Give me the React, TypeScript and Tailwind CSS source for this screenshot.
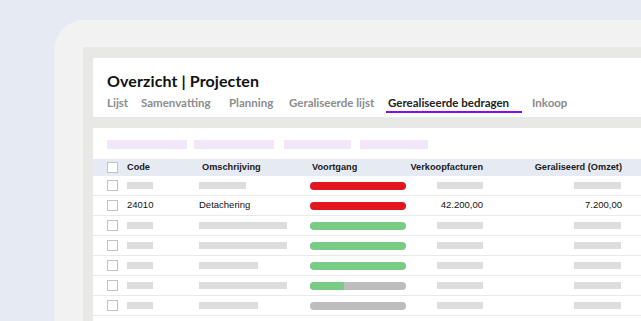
import React from "react";

type Row = {
  code?: string;
  desc?: string;
  descW: number;
  bar: "red" | "green" | "partial" | "gray";
  verk?: string;
  ger?: string;
};

const rows: Row[] = [
  { descW: 47, bar: "red" },
  { code: "24010", desc: "Detachering", descW: 0, bar: "red", verk: "42.200,00", ger: "7.200,00" },
  { descW: 88, bar: "green" },
  { descW: 88, bar: "green" },
  { descW: 59, bar: "green" },
  { descW: 88, bar: "partial" },
  { descW: 59, bar: "gray" },
];

function Checkbox() {
  return <div className="w-[11px] h-[11px] border border-[#c2c2c2] bg-white shrink-0" />;
}

function Bar({ kind }: { kind: Row["bar"] }) {
  if (kind === "partial") {
    return (
      <div className="w-[96px] h-[8px] rounded-full bg-[#bdbdbd] overflow-hidden flex">
        <div className="w-[34px] h-full bg-[#78cc84]" />
      </div>
    );
  }
  const cls =
    kind === "red" ? "bg-[#e3161f]" : kind === "green" ? "bg-[#78cc84]" : "bg-[#bdbdbd]";
  return <div className={`w-[96px] h-[8px] rounded-full ${cls}`} />;
}

function Ph({ w }: { w: number }) {
  return <div className="h-[7px] bg-[#dddddd]" style={{ width: w }} />;
}

const tabs = ["Lijst", "Samenvatting", "Planning", "Geraliseerde lijst"];
const tabW = ["w-[34px]", "w-[88px]", "w-[60px]", "w-[97px]"];

export default function App() {
  return (
    <div className="w-[641px] h-[321px] overflow-hidden bg-[#e6ebf3] pl-[54px] pt-[20px]">
      <div className="h-full bg-[#f2f2f2] rounded-tl-[30px] pl-[29px] pt-[27px]">
        <div className="h-full bg-[#e8e8e7] pl-[10px] pt-[11px] flex flex-col">
          {/* Header card */}
          <div className="bg-white h-[59px] pl-[14px] pt-[13px] flex flex-col font-['Lato',sans-serif]">
            <div className="text-[16px] leading-[19px] font-bold text-[#111] tracking-[0.1px]">Overzicht | Projecten</div>
            <div className="flex items-start mt-[5px] text-[11.5px] leading-[15px] font-bold">
              {tabs.map((t, i) => (
                <div key={t} className={`${tabW[i]} text-[#8c8c8c]`}>{t}</div>
              ))}
              <div className="w-[136px] pl-[2px] text-[#222] border-b-[2.5px] border-[#8a0ce3] pb-[1px]">
                Gerealiseerde bedragen
              </div>
              <div className="ml-[10px] text-[#8c8c8c]">Inkoop</div>
            </div>
          </div>

          {/* Table card */}
          <div className="mt-[11px] flex-1 bg-white pt-[12px] font-['Liberation_Sans',Arial,sans-serif]">
            <div className="flex pl-[14px] h-[9px]">
              <div className="w-[80px] h-full bg-[#f1e7f8]" />
              <div className="w-[80px] h-full bg-[#f1e7f8] ml-[7px]" />
              <div className="w-[67px] h-full bg-[#f1e7f8] ml-[10px]" />
              <div className="w-[68px] h-full bg-[#f1e7f8] ml-[9px]" />
            </div>

            <div className="mt-[10px] h-[17px] bg-[#e6ebf3] flex items-center pl-[14px] text-[9.2px] font-bold text-[#1a1a1a]">
              <Checkbox />
              <div className="ml-[9px] w-[72px]">Code</div>
              <div className="w-[111px] pl-[3px]">Omschrijving</div>
              <div className="w-[96px] pl-[2px]">Voortgang</div>
              <div className="w-[77px] text-right">Verkoopfacturen</div>
              <div className="w-[139px] text-right">Geraliseerd (Omzet)</div>
            </div>

            {rows.map((r, i) => (
              <div
                key={i}
                className="h-[20px] border-b border-[#e9e9e9] flex items-center pl-[14px] text-[9.5px] text-[#111]"
              >
                <Checkbox />
                <div className="ml-[9px] w-[72px]">{r.code ? r.code : <Ph w={26} />}</div>
                <div className="w-[111px]">{r.desc ? r.desc : <Ph w={r.descW} />}</div>
                <div className="w-[96px]">
                  <Bar kind={r.bar} />
                </div>
                <div className="w-[77px] flex justify-end">{r.verk ? r.verk : <Ph w={46} />}</div>
                <div className="w-[139px] flex justify-end">{r.ger ? r.ger : <div className="mr-[1px]"><Ph w={47} /></div>}</div>
              </div>
            ))}
          </div>
        </div>
      </div>
    </div>
  );
}
